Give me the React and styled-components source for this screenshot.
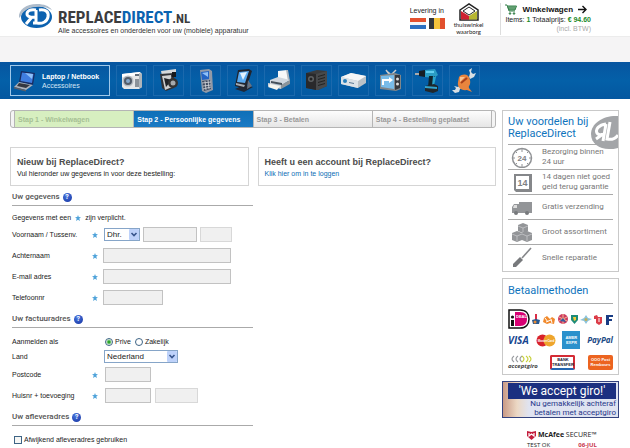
import React from "react";
import styled, { createGlobalStyle, css } from "styled-components";

const GlobalStyle = createGlobalStyle`
  *, *::before, *::after { box-sizing: border-box; }
  body {
    margin: 0;
    background: #fff;
    color: #222;
    font: 7px/10px "Liberation Sans", Arial, sans-serif;
  }
  button, input, select { font: inherit; color: inherit; margin: 0; }
  h1, h2, h3, p, ul, ol, fieldset { margin: 0; padding: 0; border: 0; list-style: none; min-width: 0; }
  a { color: inherit; text-decoration: none; }
  svg { display: block; flex: none; }
`;

/* ---------- header ---------- */

const Header = styled.header`
  display: flex;
  align-items: flex-start;
  height: 36px;
  padding: 3px 39px 0 18px;
`;
const Brand = styled.a`
  display: flex;
  gap: 4px;
  color: #3c3c3e;
`;
const BrandText = styled.div`
  padding-top: 6px;
`;
const BrandName = styled.h1`
  font: bold 17px/17px "Roboto Condensed", "Open Sans Condensed", "Roboto", sans-serif;
  span { color: #0b63b0; }
  small { font-size: 13px; }
`;
const Tagline = styled.p`
  font-size: 7px;
  line-height: 8px;
  color: #333;
  white-space: nowrap;
`;
const HeaderInfo = styled.div`
  display: flex;
  gap: 9px;
  margin-left: auto;
  white-space: nowrap;
`;
const Delivery = styled.div`
  font-size: 7px;
  line-height: 15px;
`;
const Flags = styled.div`
  display: flex;
  gap: 3px;
`;
const Waarborg = styled.div`
  font: 6px/7px "Lato", sans-serif;
  color: #222;
  text-align: center;
  svg { margin: 0 auto; }
`;
const Cart = styled.div`
  margin-left: 8px;
  padding-left: 4px;
  border-left: 1px solid #ddd;
  text-align: right;
  line-height: 9px;
`;
const CartLink = styled.a`
  display: flex;
  align-items: center;
  gap: 5px;
  height: 12px;
  font-weight: bold;
  font-size: 8px;
  color: #111;
`;
const Green = styled.b`
  color: #1a8a2a;
`;
const Muted = styled.p`
  color: #aaa;
`;
const Band = styled.div`
  height: 26px;
  background: #f5f4f5;
  border-top: 1px solid #ececec;
`;

/* ---------- product bar ---------- */

const Nav = styled.nav`
  display: flex;
  gap: 6px;
  height: 37px;
  padding: 3px 10px;
  background: linear-gradient(#0755a0, #0460a8 50%, #0457a0);
`;
const NavItem = styled.a`
  display: flex;
  align-items: center;
  justify-content: center;
  width: 31px;
  height: 31px;
  border: 1px solid #1b69ad;
  ${(p) =>
    p.$active &&
    css`
      justify-content: flex-start;
      gap: 4px;
      width: 100px;
      padding-left: 2px;
      border-color: #9fc8ea;
      color: #d4e6f5;
      line-height: 9px;
      white-space: nowrap;
      b { display: block; color: #fff; }
    `}
`;

/* ---------- layout ---------- */

const Page = styled.div`
  display: grid;
  grid-template-columns: minmax(0, 1fr) 117px;
  gap: 6px;
  padding: 11px 11px 0 10px;
`;
const Steps = styled.ol`
  display: flex;
  height: 18px;
  padding: 0 3px;
  border: 1px solid #b5b5b5;
  border-radius: 3px;
  background: #f4f4f4;
`;
const stepTone = {
  done: css`background: #d7efc0; color: #a6bf94;`,
  current: css`background: linear-gradient(#0e6fb8, #1a7ac4); color: #fff;`,
  next: css`background: linear-gradient(#fdfdfd, #e6e6e6); color: #999;`,
};
const Step = styled.li`
  flex: 1;
  padding-left: 3px;
  border-left: 1px solid #b5b5b5;
  font-weight: bold;
  line-height: 17px;
  white-space: nowrap;
  ${(p) => stepTone[p.$tone]}
  &:last-child { border-right: 1px solid #b5b5b5; }
`;
const Choices = styled.div`
  display: grid;
  grid-template-columns: 1fr 1fr;
  gap: 9px;
  margin-top: 19px;
`;
const Choice = styled.section`
  height: 39px;
  padding: 8px 6px;
  border: 1px solid #d5d5d5;
  h2 { font-size: 9px; line-height: 13px; color: #4c4c4c; }
  a { color: #0b6db5; }
`;

/* ---------- form ---------- */

const Form = styled.form`
  width: 50%;
  padding-left: 2px;
  white-space: nowrap;
`;
const Heading = styled.h3`
  display: flex;
  align-items: center;
  gap: 3px;
  height: 20px;
  padding-top: 3px;
  border-bottom: 1px solid #aaa;
  font: 500 8px/10px "Roboto", sans-serif;
  color: #555;
`;
const Help = styled.button`
  width: 9px;
  height: 9px;
  padding: 0;
  border: 0;
  border-radius: 50%;
  background: radial-gradient(circle at 40% 30%, #4a77e0, #12309e);
  color: #fff;
  font-weight: bold;
  font-size: 7px;
  line-height: 9px;
  text-align: center;
`;
const Fields = styled.div`
  padding-top: 6px;
`;
const Note = styled.p`
  display: flex;
  align-items: center;
  gap: 4px;
  height: 12px;
`;
const Row = styled.div`
  display: grid;
  grid-template-columns: 80px 11px auto;
  align-items: center;
  height: ${(p) => (p.$tight ? 15 : 21)}px;
`;
const Controls = styled.div`
  grid-column: 3;
  display: flex;
  align-items: center;
  gap: ${(p) => (p.$wide ? 4 : 3)}px;
  padding-left: ${(p) => (p.$inset ? 2 : 0)}px;
`;
const widths = { title: 36, country: 74, full: 128, name: 54, phone: 60, code: 46, extra: 43, infix: 32 };
const TextBox = styled.input`
  width: ${(p) => widths[p.$size]}px;
  height: 15px;
  padding: 0 3px;
  border: 1px solid ${(p) => (p.$light ? "#d8d8d8" : "#c2c2c2")};
  background: #f0f0f0;
`;
const Select = styled.select`
  width: ${(p) => widths[p.$size]}px;
  height: 13px;
  padding: 0 2px;
  border: 1px solid #86a5c8;
  border-radius: 0;
  appearance: none;
  font-size: 8px;
  line-height: 11px;
  background: #fff;
`;
const SelectWrap = styled.span`
  position: relative;
  display: flex;
  margin-left: 1px;
  svg { position: absolute; right: 1px; top: 1px; pointer-events: none; }
`;
const CheckLabel = styled.label`
  display: flex;
  align-items: center;
  gap: 2px;
`;
const Radio = styled.input`
  appearance: none;
  width: 8px;
  height: 8px;
  border: 1px solid #3e6485;
  border-radius: 50%;
  background: #fff;
  &:checked { background: radial-gradient(circle, #2ba52b 0 1px, #fff 3px); }
`;
const Tick = styled.input`
  appearance: none;
  width: 8px;
  height: 8px;
  margin-left: 2px;
  border: 1px solid #3e6485;
  background: #f6f6f4;
`;
const TickRow = styled.div`
  display: flex;
  align-items: center;
  height: 15px;
`;

/* ---------- sidebar ---------- */

const Aside = styled.aside`
  display: flex;
  flex-direction: column;
  gap: 6px;
`;
const Panel = styled.section`
  padding: 0 5px 1px;
  border: 1px solid #c9c9c9;
`;
const PanelTitle = styled.h2`
  display: flex;
  align-items: center;
  position: relative;
  height: ${(p) => (p.$tall ? 33 : 24)}px;
  font: 11px/12px "Roboto", sans-serif;
  color: #0f74bd;
  white-space: nowrap;
  svg { position: absolute; right: -5px; top: 4px; z-index: 1; }
`;
const Benefit = styled.li`
  display: grid;
  grid-template-columns: 22px 1fr;
  gap: 9px;
  align-items: center;
  height: 25px;
  padding-left: 3px;
  border-top: 1px solid #aaa;
  font: 8px/10px "Roboto", sans-serif;
  color: #777;
  white-space: nowrap;
  &:last-child { height: 26px; }
`;
const Payments = styled.div`
  padding-top: 5px;
  border-top: 1px solid #aaa;
`;
const PayRow = styled.div`
  display: flex;
  align-items: center;
  justify-content: space-between;
  height: ${(p) => (p.$first ? 20 : 22)}px;
`;
const PayWord = styled.span`
  color: ${(p) => p.$color};
  font: italic bold ${(p) => p.$px}px/10px "Open Sans", sans-serif;
`;
const Giro = styled.span`
  color: #444;
  font: italic bold 6px/6px "Open Sans", sans-serif;
`;
const CardLogo = styled.span`
  display: flex;
  align-items: center;
  justify-content: center;
  width: ${(p) => p.$w}px;
  height: ${(p) => p.$h}px;
  border: ${(p) => p.$edge || "0"};
  border-bottom-color: ${(p) => p.$base || "inherit"};
  border-radius: ${(p) => (p.$round ? 2 : 0)}px;
  background: ${(p) => p.$bg};
  color: ${(p) => p.$ink};
  font: bold 4px/5px "Liberation Sans", sans-serif;
  text-align: center;
`;
const Banner = styled.a`
  display: flex;
  flex-direction: column;
  height: 37px;
  padding: 1px 2px 0 5px;
  border: 1px solid #33427f;
  background: linear-gradient(90deg, #c99a86 0, #ecd8c4 14px, #dfe3f1 26px, #dfe3f1);
  font-family: "Roboto", sans-serif;
  white-space: nowrap;
`;
const BannerTitle = styled.strong`
  height: 16px;
  background: #1b2f80;
  color: #fff;
  font-weight: normal;
  font-size: 12px;
  line-height: 16px;
  text-align: center;
`;
const BannerText = styled.span`
  color: #27388a;
  font-size: 8px;
  line-height: 9px;
  text-align: right;
`;
const Secure = styled.div`
  width: 70px;
  margin: 5px auto 0 25px;
`;
const SecureName = styled.div`
  display: flex;
  align-items: center;
  gap: 2px;
  font: 7px/11px "Open Sans", sans-serif;
  white-space: nowrap;
`;
const SecureStatus = styled.div`
  display: flex;
  justify-content: space-between;
  font: 6px/10px "Open Sans", sans-serif;
  span:last-child { color: #c8344c; font-weight: bold; }
`;

/* ---------- drawings ---------- */

const LogoMark = () => (
  <svg width="36" height="26" viewBox="0 0 36 26">
    <ellipse cx="18.500" cy="14" rx="15.500" ry="11" fill="#0c62b0" />
    <path d="M1 15C0 7 8 1 19 1c7 0 12 2 15 6C25 1 6 3 3 13z" fill="#aebccb" />
    <path d="M18 7v14M18 7c-6-1-9 1-9 4 0 2 3 4 9 3M14 14l-6 7M21 7c7-1 10 2 9 7s-6 7-11 6h-4" fill="none" stroke="#fff" strokeWidth="3" />
  </svg>
);
const GrayMark = () => (
  <svg width="27" height="35" viewBox="0 0 27 35">
    <path d="M27 1C13 0 0 8 0 19c0 9 8 15 18 15 3 0 6 0 9-1z" fill="#a3a5a8" />
    <path d="M15 9c-7 1-11 5-9 9 1 2 4 2 8 1M15 9l-3 17M12 19l-7 5M19 7l-3 17c5 1 9-1 11-4" fill="none" stroke="#fff" strokeWidth="3" />
  </svg>
);
const FlagNL = () => (
  <svg width="16" height="11"><path fill="#e4502e" d="M0 0h16v4H0z" /><path fill="#f5f5f5" d="M0 4h16v3H0z" /><path fill="#2c6fc0" d="M0 7h16v4H0z" /></svg>
);
const FlagBE = () => (
  <svg width="16" height="11"><path fill="#33373a" d="M0 0h5v11H0z" /><path fill="#f5c43c" d="M5 0h6v11H5z" /><path fill="#e2502d" d="M11 0h5v11h-5z" /></svg>
);
const House = () => (
  <svg width="20" height="18" viewBox="0 0 20 18">
    <path d="M1 7l9-6 9 6v10H1z" fill="#fff" stroke="#222" strokeWidth="1.500" />
    <path d="M2 8l8 5v3.500H2z" fill="#cf2331" /><path d="M18 8l-8 5v3.500h8z" fill="#b7b632" />
    <path d="M4 8l6-4 6 4-6 4z" fill="#fff" stroke="#222" strokeWidth="1" />
  </svg>
);
const CartIcon = () => (
  <svg width="12" height="11" viewBox="0 0 12 11" fill="none" stroke="#35804a">
    <path d="M0 1h2l2 6h6" /><path d="M2.500 2H11.500L10 6H4z" fill="#8fc09a" /><path d="M5 2v4M7 2v4M9 2v4M3 4h8" strokeWidth=".6" />
    <circle cx="5" cy="9.500" r=".8" fill="#35804a" /><circle cx="9" cy="9.500" r=".8" fill="#35804a" />
  </svg>
);
const ArrowIcon = () => (
  <svg width="9" height="9" viewBox="0 0 9 9"><path d="M0 4.500h8M4.500 1L8 4.500 4.500 8" fill="none" stroke="#111" strokeWidth="1.400" /></svg>
);
const Star = () => (
  <svg width="6" height="6" viewBox="0 0 10 10"><path d="M5 0l1.300 3.400L10 3.600 7.200 6 8.200 10 5 7.800 1.800 10l1-4L0 3.600l3.700-.2z" fill="#4fa3da" /></svg>
);
const Chevron = () => (
  <svg width="10" height="11" viewBox="0 0 10 11"><rect width="10" height="11" rx="1" fill="#bed2fa" /><path d="M2.500 4L5 6.500 7.500 4" fill="none" stroke="#37558c" strokeWidth="1.600" /></svg>
);

const products = {
  Laptop: (
    <>
      <path d="M8 3l14 2-2 12L6 14z" fill="#182b62" /><path d="M9 4.500l11.500 1.600L19 15 7.500 13z" fill="#3f7de0" /><path d="M12 5l8 1-1 5z" fill="#8fc0f8" />
      <path d="M6 14l14 3-7 5-12-3z" fill="#adb1ba" /><path d="M6 15l11 2-4 3-9-2z" fill="#343740" /><path d="M1 19l12 3v1.500L1 20.500z" fill="#5c5f68" />
    </>
  ),
  Camera: (
    <>
      <path d="M3 6l18-2 2 2v13l-3 2H5l-2-2z" fill="#e5e7e8" /><path d="M3 6l18-2v3L3 9z" fill="#fff" /><path d="M20 5l3 1v13l-3 2z" fill="#aeb5bb" />
      <circle cx="9" cy="13" r="5.500" fill="#b6bcc2" /><circle cx="9" cy="13" r="4" fill="#525c69" /><circle cx="9" cy="13" r="2" fill="#87a9cb" />
      <path d="M16 11h4v8h-4z" fill="#8c939a" /><path d="M16 6h4v2h-4z" fill="#616d7a" />
    </>
  ),
  Camcorder: (
    <>
      <path d="M5 3l15-2v4L6 8z" fill="#d5d8da" /><path d="M4 6l14-1v15l-8 3-4-3z" fill="#313338" /><path d="M6 8l9-1 1 12-7 3z" fill="#cfd0d1" />
      <path d="M8 10l8 2-6 7z" fill="#202328" /><circle cx="17" cy="15" r="5" fill="#333" /><circle cx="17" cy="15" r="2.500" fill="#a6aaad" /><path d="M16 4h4v5h-4z" fill="#17191c" />
    </>
  ),
  Phone: (
    <>
      <path d="M7 2l9-1 3 2 1 19-7 3-4-2z" fill="#929aa7" /><path d="M8 4l8-1v8l-7 1z" fill="#2464c4" /><path d="M9 5l6-1v5z" fill="#8fc0f8" />
      <path d="M9 13l8-1 1 9-7 2z" fill="#404c61" /><path d="M9 15l9-1M10 18l8-1M10 21l8-2M12 13l1 9M15 12l1 9" stroke="#d5d8dc" strokeWidth=".8" />
    </>
  ),
  Pda: (
    <>
      <path d="M5 21l9-4 9 2-9 5z" fill="#202837" /><path d="M8 2l11-1 3 2-6 18-11-3z" fill="#20242e" /><path d="M9 4l10-1-4 12-8-1z" fill="#58a8ef" /><path d="M10 5l7-1-4 8z" fill="#e1f1fe" />
      <path d="M6 15l9 2-1 2-8-2z" fill="#a4aab2" /><path d="M18 12l4 6-5 3z" fill="#687180" />
    </>
  ),
  Printer: (
    <>
      <path d="M11 3l9-1 2 10-11 1z" fill="#f7f8f9" /><path d="M19 2l2 0 2 11h-2z" fill="#aeb6be" /><path d="M3 12l8-3 12 3-8 5-12-1z" fill="#d0d7df" /><path d="M1 15l13 2v4L1 18z" fill="#cdd1d5" /><path d="M14 17l9-5v4l-9 5z" fill="#8d949a" />
      <path d="M3 16l10 2-3 4-9-3z" fill="#f5f5ef" /><path d="M4 13l11 2v2L4 15z" fill="#444f5a" />
    </>
  ),
  Drive: (
    <>
      <path d="M2 5l11-3 10 1v15l-9 4L2 20z" fill="#3a3b3d" /><path d="M2 5l10 1v16L2 20z" fill="#29292b" /><path d="M12 6l11-3v15l-9 4h-2z" fill="#47494b" />
      <path d="M14 8l7-2v1l-7 2zm0 3l7-2v1l-7 2zm0 3l7-2v1l-7 2zm0 3l7-2v1l-7 2z" fill="#222" /><circle cx="7" cy="11" r="3" fill="#5e6163" /><circle cx="7" cy="11" r="1.500" fill="#222" />
    </>
  ),
  Modem: (
    <>
      <path d="M0 9l10-4 15 3v7l-8 5L0 16z" fill="#b9c1c7" /><path d="M0 9l10-4 15 3-8 5z" fill="#f6f7f8" /><path d="M0 9l17 4v7L0 16z" fill="#dbe2e7" />
      <circle cx="4" cy="13" r="2" fill="#267fbb" /><path d="M8 14l5 1v1l-5-1z" fill="#5b7995" />
    </>
  ),
  Television: (
    <>
      <path d="M10 4l3 3 5-5M8 2l3 4" stroke="#ccc" strokeWidth="1.500" /><path d="M2 7l15-2 6 2v14l-5 2-16-2z" fill="#80868a" /><path d="M3 8l13-1v14L3 19z" fill="#79bce9" />
      <path d="M5 17V12h7" stroke="#fff" strokeWidth="2" fill="none" /><path d="M11 9l4 3-4 3z" fill="#fff" /><path d="M17 7h5v13l-5 2z" fill="#35383e" /><circle cx="19.500" cy="11" r="1.500" fill="#ddd" /><circle cx="19.500" cy="16" r="1.500" fill="#ddd" />
    </>
  ),
  Drill: (
    <>
      <path d="M0 5h5v2H0z" fill="#aaa" /><path d="M4 3l6-1v7l-6-1z" fill="#161e24" /><path d="M10 2l10-1 3 6-4 3-9-1z" fill="#2a9dc5" /><path d="M11 3l8 0v2h-8z" fill="#64cff0" />
      <path d="M14 8l6 0-1 11-6 1z" fill="#10242c" /><path d="M18 8l3 1-2 9-2 0z" fill="#29a5ce" /><path d="M10 18l9-2 4 2v5l-5 2-8-2z" fill="#21272b" /><path d="M10 18l12 1v2l-12-1z" fill="#31a4d0" />
    </>
  ),
  Repair: (
    <>
      <path d="M17 9l1-4-1-3 3-2-1 4 2 2 3-1-2 4-4 2z" fill="#d8dfe3" /><path d="M10 16l-4 3-4-1 2 2-1 2-3 0 3 3 4-1 1-3 4-3z" fill="#d8dfe3" />
      <path d="M7 9c4-4 10-3 11 3s-2 5-1 8l3 4-5-2c-6 1-10-3-9-8z" fill="#e9853e" /><path d="M9 15l6-5" stroke="#a8401c" strokeWidth="2" /><path d="M8 9l5 0-5 5z" fill="#f9c492" />
    </>
  ),
};
const Product = ({ name }) => (
  <svg width="25" height="25" viewBox="0 0 25 25" fill="none">{products[name]}</svg>
);

const benefitArt = {
  clock: (
    <>
      <circle cx="11" cy="11" r="9.500" fill="none" stroke="#909295" strokeWidth="1.500" />
      <path d="M11 2v3M11 17v3M2 11h2M18 11h2M4.500 4.500l1.500 1.500M16 16l1.500 1.500M17.500 4.500L16 6M6 16l-1.500 1.500" stroke="#909295" />
      <text x="11" y="14" fontSize="8" fontWeight="bold" textAnchor="middle" fill="#7e8083">24</text>
    </>
  ),
  calendar: (
    <>
      <path d="M3 2h18v18H5l-2-2z" fill="#85878a" /><path d="M5 4h13v13H5z" fill="#fff" />
      <text x="11.500" y="14" fontSize="9" fontWeight="bold" textAnchor="middle" fill="#7e8083">14</text>
    </>
  ),
  truck: (
    <>
      <path d="M8 5h13v11H8zM1 10l2-3h5v9H1z" fill="#939598" /><circle cx="5" cy="16" r="2" fill="#77797c" /><circle cx="16" cy="16" r="2" fill="#77797c" /><path d="M3 8h3v3H2z" fill="#ddd" />
    </>
  ),
  boxes: (
    <>
      <path d="M7 3l5-2 5 2v6l-5 2-5-2zM1 11l5-2 5 2v7l-5 2-5-2zM11 11l5-2 5 2v7l-5 2-5-2z" fill="#939598" />
      <path d="M7 4l5 2 5-2M12 6v4M1 12l5 2 5-2M6 14v5M11 12l5 2 5-2M16 14v5" fill="none" stroke="#c7c8ca" strokeWidth=".8" />
    </>
  ),
  driver: (
    <>
      <path d="M20 1L11 11" stroke="#85878a" strokeWidth="1.600" /><path d="M9 10l3 3-7 7H2v-3z" fill="#77797c" />
    </>
  ),
};
const BenefitIcon = ({ name }) => (
  <svg width="22" height="21" viewBox="0 0 22 21" fontFamily="Liberation Sans">{benefitArt[name]}</svg>
);

const Ideal = () => (
  <svg width="22" height="20" viewBox="0 0 22 20">
    <path d="M1 1h11c6 0 9 4 9 9s-3 9-9 9H1z" fill="#fff" stroke="#111" strokeWidth="1.500" />
    <path d="M7 3h5c5 0 7 3 7 7s-2 7-7 7H7z" fill="#d80073" /><circle cx="4.500" cy="8" r="1.600" fill="#111" /><path d="M3 11h3v6H3z" fill="#111" />
    <text x="8" y="9" fontSize="4" fontWeight="bold" fill="#fff" fontFamily="Liberation Sans">DEAL</text>
  </svg>
);
const Banks = () => (
  <svg width="82" height="11" viewBox="0 0 82 11">
    <path d="M4 0h2v6H4z" fill="#da2e47" /><path d="M1 6l4-1 4 1-1 4H2z" fill="#28588f" /><circle cx="4" cy="8" r="1.500" fill="#ea8c35" />
    <path d="M12 8l1-4 3-2 3 3 2-2 3 2-1 5-4-1-3 1z" fill="#f18a2d" /><path d="M14 4l3 4M20 5l1 4M15 8l5-2" stroke="#fff" />
    <circle cx="32" cy="5" r="5" fill="#cc3b61" /><path d="M28 3l8 4M28 7l8-4M32 0v10" stroke="#f7bb91" /><path d="M29 7l3-3 3 4z" fill="#305ca0" />
    <path d="M40 1h7v5l-3.500 4L40 6z" fill="#1d8b78" /><path d="M42 3h3v3l-2 1z" fill="#f4ce3a" />
    <path d="M55 1l2 3 4 1-4 2-2 3-2-3-4-1 4-2z" fill="#8bc3db" /><circle cx="55" cy="5.500" r="1.500" fill="#c4ae58" />
    <path d="M63 2l3-1 1 2h4v6l-3 2-3-2V5h-2z" fill="#dc3c48" /><path d="M68 4v4" stroke="#fff" />
    <path d="M75 1h7v2h-4v2h3v2h-3v4h-3z" fill="#193c84" />
  </svg>
);
const Mastercard = () => (
  <svg width="20" height="13" viewBox="0 0 20 13">
    <circle cx="6.500" cy="6.500" r="6" fill="#d8222a" /><circle cx="13.500" cy="6.500" r="6" fill="#eea52c" />
    <text x="10" y="8" fontSize="3" fontWeight="bold" textAnchor="middle" fill="#fff" fontFamily="Liberation Sans">MasterCard</text>
  </svg>
);
const GiroArcs = () => (
  <svg width="26" height="8" viewBox="0 0 26 8" fill="none" strokeWidth="1.200">
    <path d="M6 1Q2 4 6 7M10 1Q6 4 10 7M14 1q-4 3 0 6" stroke="#9a9ca0" /><path d="M14 1q4 3 0 6M18 1q4 3 0 6M21 1q4 3 0 6" stroke="#c8d13e" />
  </svg>
);
const Shield = () => (
  <svg width="9" height="10" viewBox="0 0 9 10"><path d="M0 1l4.500 1L9 1v5L4.500 10 0 6z" fill="#c31d3c" /><path d="M2 3v3l2.500-2L7 6V3" fill="none" stroke="#fff" strokeWidth="1.200" /></svg>
);

/* ---------- composed parts ---------- */

const SectionHeading = ({ children }) => (
  <Heading>{children}<Help type="button" aria-label={`Hulp bij ${children}`}>?</Help></Heading>
);
const Field = ({ id, label, required, tight, inset, wide, children }) => (
  <Row $tight={tight}>
    <label htmlFor={id}>{label}</label>
    {required && <Star />}
    <Controls $inset={inset} $wide={wide}>{children}</Controls>
  </Row>
);
const DropDown = ({ id, size, label, options }) => (
  <SelectWrap>
    <Select id={id} $size={size} aria-label={label}>{options.map((o) => <option key={o}>{o}</option>)}</Select>
    <Chevron />
  </SelectWrap>
);

const steps = [
  ["Stap 1 - Winkelwagen", "done"],
  ["Stap 2 - Persoonlijke gegevens", "current"],
  ["Stap 3 - Betalen", "next"],
  ["Stap 4 - Bestelling geplaatst", "next"],
];
const benefits = [
  ["clock", <>Bezorging binnen<br />24 uur</>],
  ["calendar", <>14 dagen niet goed<br />geld terug garantie</>],
  ["truck", "Gratis verzending"],
  ["boxes", "Groot assortiment"],
  ["driver", "Snelle reparatie"],
];

export default function App() {
  return (
    <>
      <GlobalStyle />
      <Header>
        <Brand href="#">
          <LogoMark />
          <BrandText>
            <BrandName>REPLACE<span>DIRECT</span><small>.NL</small></BrandName>
            <Tagline>Alle accessoires en onderdelen voor uw (mobiele) apparatuur</Tagline>
          </BrandText>
        </Brand>
        <HeaderInfo>
          <Delivery>Levering in<Flags><FlagNL /><FlagBE /></Flags></Delivery>
          <Waarborg><House />thuiswinkel<br />waarborg</Waarborg>
          <Cart>
            <CartLink href="#"><CartIcon />Winkelwagen<ArrowIcon /></CartLink>
            <p>Items: <Green>1</Green> Totaalprijs: <Green>€ 94.60</Green></p>
            <Muted>(incl. BTW)</Muted>
          </Cart>
        </HeaderInfo>
      </Header>
      <Band />
      <Nav>
        <NavItem href="#" $active><Product name="Laptop" /><span><b>Laptop / Netbook</b>Accessoires</span></NavItem>
        {Object.keys(products).slice(1).map((name) => (
          <NavItem key={name} href="#" aria-label={name}><Product name={name} /></NavItem>
        ))}
      </Nav>
      <Page>
        <main>
          <Steps>{steps.map(([text, tone]) => <Step key={text} $tone={tone}>{text}</Step>)}</Steps>
          <Choices>
            <Choice><h2>Nieuw bij ReplaceDirect?</h2><p>Vul hieronder uw gegevens in voor deze bestelling:</p></Choice>
            <Choice><h2>Heeft u een account bij ReplaceDirect?</h2><a href="#">Klik hier om in te loggen</a></Choice>
          </Choices>
          <Form>
            <SectionHeading>Uw gegevens</SectionHeading>
            <Fields>
              <Note>Gegevens met een <Star /> zijn verplicht.</Note>
              <Field id="first" label="Voornaam / Tussenv." required>
                <DropDown id="title" size="title" label="Aanhef" options={["Dhr.", "Mevr."]} />
                <TextBox id="first" $size="name" />
                <TextBox aria-label="Tussenvoegsel" $size="infix" $light />
              </Field>
              <Field id="last" label="Achternaam" required><TextBox id="last" $size="full" /></Field>
              <Field id="mail" label="E-mail adres" required><TextBox id="mail" type="email" $size="full" /></Field>
              <Field id="phone" label="Telefoonnr" required><TextBox id="phone" type="tel" $size="phone" /></Field>
            </Fields>
            <SectionHeading>Uw factuuradres</SectionHeading>
            <Fields>
              <Field id="private" label="Aanmelden als" tight inset wide>
                <CheckLabel><Radio id="private" type="radio" name="kind" defaultChecked />Prive</CheckLabel>
                <CheckLabel><Radio type="radio" name="kind" />Zakelijk</CheckLabel>
              </Field>
              <Field id="country" label="Land" tight>
                <DropDown id="country" size="country" options={["Nederland", "België"]} />
              </Field>
              <Field id="zip" label="Postcode" required inset><TextBox id="zip" $size="code" /></Field>
              <Field id="number" label="Huisnr + toevoeging" required inset wide>
                <TextBox id="number" $size="code" />
                <TextBox aria-label="Toevoeging" $size="extra" $light />
              </Field>
            </Fields>
            <SectionHeading>Uw afleveradres</SectionHeading>
            <Fields>
              <TickRow><CheckLabel><Tick type="checkbox" />Afwijkend afleveradres gebruiken</CheckLabel></TickRow>
            </Fields>
          </Form>
        </main>
        <Aside>
          <Panel>
            <PanelTitle $tall><span>Uw voordelen bij<br />ReplaceDirect</span><GrayMark /></PanelTitle>
            <ul>{benefits.map(([icon, text]) => <Benefit key={icon}><BenefitIcon name={icon} /><span>{text}</span></Benefit>)}</ul>
          </Panel>
          <Panel>
            <PanelTitle>Betaalmethoden</PanelTitle>
            <Payments>
              <PayRow $first><Ideal /><Banks /></PayRow>
              <PayRow>
                <PayWord $color="#17468f" $px={10}>VISA</PayWord>
                <Mastercard />
                <CardLogo $w={18} $h={18} $bg="#2b91cc" $ink="#fff">AMER<br />EXPR</CardLogo>
                <PayWord $color="#1c4a84" $px={8}>PayPal</PayWord>
              </PayRow>
              <PayRow>
                <Giro><GiroArcs />acceptgiro</Giro>
                <CardLogo $w={25} $h={15} $bg="#fff" $ink="#223" $edge="2px solid #d42b35" $base="#2566b0" $round>BANK<br />TRANSFER</CardLogo>
                <CardLogo $w={25} $h={15} $bg="#ec6420" $ink="#fff" $round>OOO Post<br />Rembours</CardLogo>
              </PayRow>
            </Payments>
          </Panel>
          <Banner href="#">
            <BannerTitle>'We accept giro!'</BannerTitle>
            <BannerText>Nu gemakkelijk achteraf<br />betalen met acceptgiro</BannerText>
          </Banner>
          <Secure>
            <SecureName><Shield /><span><b>McAfee</b> SECURE™</span></SecureName>
            <SecureStatus><span>TEST OK</span><span>06-JUL</span></SecureStatus>
          </Secure>
        </Aside>
      </Page>
    </>
  );
}
